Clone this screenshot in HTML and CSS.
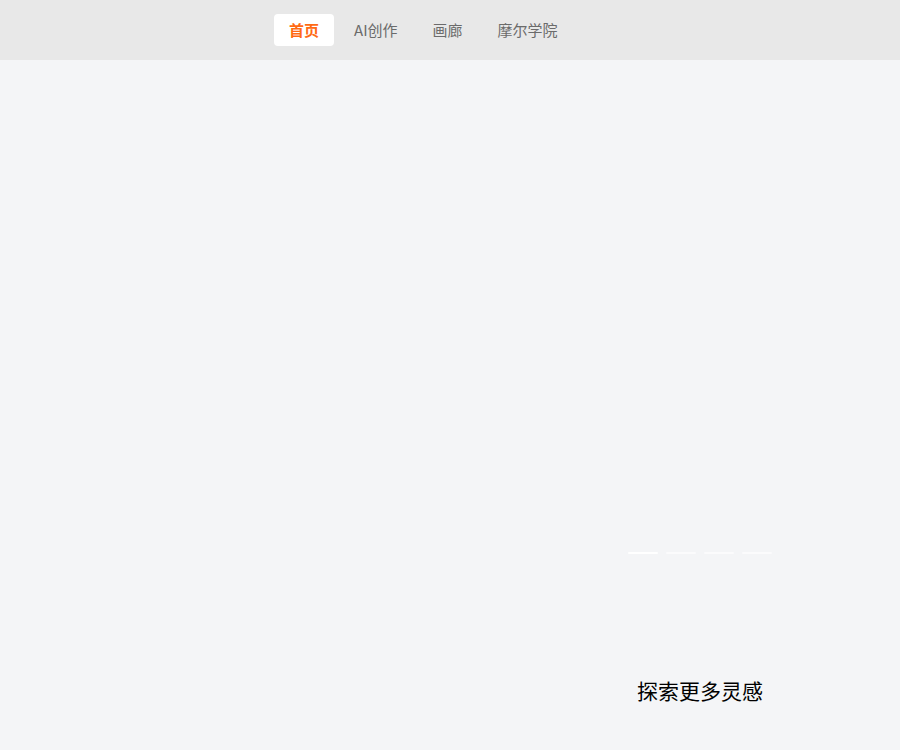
FILE: index.html
```html
<!DOCTYPE html>
<html lang="zh">
<head>
<meta charset="utf-8">
<title>首页</title>
<link rel="stylesheet" href="styles.css">
</head>
<body>
<header class="topbar">
  <nav class="nav">
    <a class="tab active">首页</a>
    <a class="tab">AI创作</a>
    <a class="tab">画廊</a>
    <a class="tab">摩尔学院</a>
  </nav>
</header>
<main class="main">
  <section class="hero">
    <div class="hero-side">
      <div class="dots">
        <span class="dot on"></span>
        <span class="dot"></span>
        <span class="dot"></span>
        <span class="dot"></span>
      </div>
    </div>
  </section>
  <section class="explore">
    <h2 class="explore-title">探索更多灵感</h2>
  </section>
</main>
</body>
</html>
```
FILE: styles.css
```css
html, body {
  margin: 0;
  padding: 0;
}
body {
  background: #f4f5f7;
  font-family: "Noto Sans CJK SC", "Noto Sans", sans-serif;
  width: 900px;
  height: 750px;
  overflow: hidden;
}
.topbar {
  height: 60px;
  background: #e8e8e8;
  display: flex;
  align-items: center;
  padding-left: 274px;
  box-sizing: border-box;
}
.nav {
  display: flex;
  gap: 5px;
}
.tab {
  height: 32px;
  line-height: 32px;
  padding: 0 15px;
  font-size: 15px;
  color: #6b6b6b;
  border-radius: 4px;
  cursor: pointer;
}
.tab.active {
  background: #ffffff;
  color: #ff6a13;
  font-weight: 700;
}
.main {
  display: flex;
  flex-direction: column;
}
.hero {
  height: 500px;
  display: grid;
  grid-template-columns: 600px 200px;
}
.hero-side {
  grid-column: 2;
  display: flex;
  justify-content: center;
  align-items: flex-end;
  padding-bottom: 6px;
}
.dots {
  display: flex;
  gap: 8px;
}
.dot {
  width: 30px;
  height: 2px;
  border-radius: 1px;
  background: rgba(255, 255, 255, 0.6);
}
.dot.on {
  background: #ffffff;
}
.explore {
  display: grid;
  grid-template-columns: 600px 200px;
  padding-top: 115px;
}
.explore-title {
  grid-column: 2;
  margin: 0;
  text-align: center;
  font-size: 21px;
  font-weight: 400;
  color: #000;
  line-height: 30px;
}
```
